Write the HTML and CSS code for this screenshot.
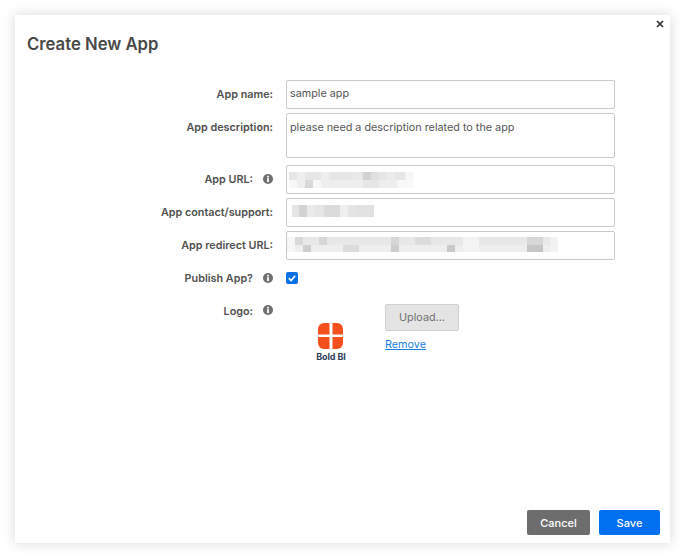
FILE: index.html
```html
<!DOCTYPE html>
<html lang="en">
<head>
<meta charset="utf-8">
<title>Create New App</title>
<link rel="stylesheet" href="styles.css">
</head>
<body>
<main class="dialog">
  <button class="close" aria-label="Close">
    <svg viewBox="0 0 8 8" width="8" height="8"><path d="M1 1l6 6M7 1L1 7" stroke="#333" stroke-width="1.7" fill="none"/></svg>
  </button>
  <h1 class="title">Create New App</h1>
  <form class="form">
    <div class="row">
      <label class="label">App name:</label>
      <div class="field"><div class="input">sample app</div></div>
    </div>
    <div class="row row-desc">
      <label class="label">App description:</label>
      <div class="field"><div class="input textarea">please need a description related to the app</div></div>
    </div>
    <div class="row row-first-url">
      <label class="label with-info">App URL:<svg class="info" viewBox="0 0 10 10"><circle cx="5" cy="5" r="5" fill="#6f6f6f"/><rect x="4.1" y="4.2" width="1.8" height="3.9" fill="#fff"/><rect x="4.1" y="1.8" width="1.8" height="1.7" fill="#fff"/></svg></label>
      <div class="field"><div class="input">
        <svg class="mosaic mosaic-url" width="124" height="16" viewBox="0 0 124 16">
          <rect width="116" height="8" fill="#e6e6e6"/><rect x="116" width="8" height="8" fill="#f6f6f6"/><rect y="8" width="124" height="8" fill="#eeeeee"/>
          <rect x="8" width="8" height="8" fill="#eeeeee"/><rect x="32" width="8" height="8" fill="#eeeeee"/><rect x="64" width="8" height="8" fill="#eaeaea"/><rect x="74" width="8" height="8" fill="#d2d2d2"/><rect x="82" width="8" height="8" fill="#e0e0e0"/><rect x="98" width="8" height="8" fill="#ececec"/>
          <rect x="0" y="8" width="8" height="8" fill="#f7f7f7"/><rect x="16" y="8" width="8" height="8" fill="#d9d9d9"/><rect x="24" y="8" width="8" height="8" fill="#f7f7f7"/><rect x="74" y="8" width="16" height="8" fill="#e6e6e6"/><rect x="108" y="8" width="16" height="8" fill="#f8f8f8"/>
        </svg>
      </div></div>
    </div>
    <div class="row">
      <label class="label">App contact/support:</label>
      <div class="field"><div class="input">
        <svg class="mosaic mosaic-contact" width="82" height="12" viewBox="0 0 82 12">
          <rect width="82" height="12" fill="#e5e5e5"/><rect x="7" width="8" height="12" fill="#d3d3d3"/><rect x="15" width="8" height="12" fill="#eaeaea"/><rect x="32" width="16" height="12" fill="#dbdbdb"/><rect x="48" width="8" height="12" fill="#efefef"/><rect x="64" width="18" height="12" fill="#e2e2e2"/>
        </svg>
      </div></div>
    </div>
    <div class="row">
      <label class="label">App redirect URL:</label>
      <div class="field"><div class="input">
        <svg class="mosaic mosaic-redirect" width="271" height="15" viewBox="0 0 271 15">
          <rect width="271" height="8" fill="#e8e8e8"/><rect y="8" width="271" height="7" fill="#eeeeee"/>
          <rect x="0" width="8" height="15" fill="#f6f6f6"/><rect x="8" width="8" height="8" fill="#d9d9d9"/><rect x="16" y="8" width="8" height="7" fill="#cfcfcf"/><rect x="32" width="8" height="8" fill="#d6d6d6"/><rect x="56" y="8" width="16" height="7" fill="#dcdcdc"/><rect x="104" width="8" height="8" fill="#d6d6d6"/><rect x="104" y="8" width="8" height="7" fill="#cecece"/><rect x="128" width="16" height="8" fill="#dcdcdc"/><rect x="160" y="8" width="8" height="7" fill="#c9c9c9"/><rect x="176" width="16" height="15" fill="#f3f3f3"/><rect x="240" width="16" height="8" fill="#d7d7d7"/><rect x="240" y="8" width="16" height="7" fill="#c6c6c6"/><rect x="263" width="8" height="15" fill="#f2f2f2"/>
        </svg>
      </div></div>
    </div>
    <div class="row row-publish">
      <label class="label with-info">Publish App?<svg class="info" viewBox="0 0 10 10"><circle cx="5" cy="5" r="5" fill="#6f6f6f"/><rect x="4.1" y="4.2" width="1.8" height="3.9" fill="#fff"/><rect x="4.1" y="1.8" width="1.8" height="1.7" fill="#fff"/></svg></label>
      <div class="field">
        <span class="check"><svg viewBox="0 0 12 12" width="12" height="12"><path d="M2.8 6.2l2.3 2.3 4.1-4.7" stroke="#fff" stroke-width="1.7" fill="none"/></svg></span>
      </div>
    </div>
    <div class="row row-logo">
      <label class="label with-info">Logo:<svg class="info" viewBox="0 0 10 10"><circle cx="5" cy="5" r="5" fill="#6f6f6f"/><rect x="4.1" y="4.2" width="1.8" height="3.9" fill="#fff"/><rect x="4.1" y="1.8" width="1.8" height="1.7" fill="#fff"/></svg></label>
      <div class="field logo-field">
        <div class="logo">
          <svg viewBox="0 0 26 26" width="26" height="26">
            <path d="M6 0H11.5V11.5H0V6a6 6 0 0 1 6-6Z" fill="#f4501e"/>
            <path d="M14.5 0H19a6 6 0 0 1 6 6v5.500H14.500Z" fill="#f4501e"/>
            <path d="M0 14H11.500V26H6a6 6 0 0 1-6-6Z" fill="#f4501e"/>
            <path d="M14.500 14H25v6a6 6 0 0 1-6 6h-4.500Z" fill="#f4501e"/>
          </svg>
          <span class="logo-text">Bold BI</span>
        </div>
        <div class="logo-actions">
          <button type="button" class="upload">Upload...</button>
          <a class="remove" href="#">Remove</a>
        </div>
      </div>
    </div>
  </form>
  <footer class="footer">
    <button type="button" class="btn cancel">Cancel</button>
    <button type="button" class="btn save">Save</button>
  </footer>
</main>
</body>
</html>
```
FILE: styles.css
```css
* { box-sizing: border-box; }
html, body { margin: 0; height: 100%; background: #fff; overflow: hidden; }
body { padding: 15px 15px 14px; font-family: Inter, "Noto Sans", sans-serif; color: #4a4a4a; }
.dialog {
  position: relative;
  width: 655px;
  height: 528px;
  background: #fff;
  box-shadow: 0 0 12px rgba(0, 0, 0, 0.16);
  display: flex;
  flex-direction: column;
}
.close {
  position: absolute;
  top: 4px;
  right: 5px;
  width: 10px;
  height: 10px;
  padding: 0;
  border: 0;
  background: none;
  display: flex;
  align-items: center;
  justify-content: center;
}
.title {
  margin: 19px 0 0 12px;
  font-size: 16.7px;
  line-height: 20px;
  font-weight: 600;
  color: #484848;
}
.form {
  margin-top: 26px;
  display: flex;
  flex-direction: column;
  gap: 6px;
}
.row {
  display: grid;
  grid-template-columns: 258px 329px;
  column-gap: 13px;
  height: 27px;
}
.row-desc { height: 45px; }
.row-first-url { margin-top: 1px; }
.row-publish { height: 20px; margin-top: 7px; }
.row-logo { height: 70px; margin-top: 5px; }
.label {
  text-align: right;
  font-size: 10.8px;
  line-height: 29px;
  font-weight: 600;
  color: #505050;
  position: relative;
}
.with-info { padding-right: 20px; }
.row-publish .label { line-height: 15px; }
.row-logo .label { line-height: 19px; }
.info {
  position: absolute;
  right: 0;
  top: 9px;
  width: 10px;
  height: 10px;
}
.row-publish .info { top: 2px; }
.row-logo .info { top: 3px; }
.input {
  height: 100%;
  border: 1px solid #c9c9c9;
  border-radius: 2px;
  padding: 0 3px;
  font-size: 10.8px;
  line-height: 25px;
  color: #555;
  display: flex;
  align-items: flex-start;
  background: #fff;
  overflow: hidden;
}
.textarea { line-height: 27px; }
.mosaic { display: block; }
.mosaic-url { margin: 6px 0 0 -1px; }
.mosaic-contact { margin: 6px 0 0 2px; }
.mosaic-redirect { margin: 5px 0 0 -3px; }
.check {
  margin: 1px 0 0 0;
  width: 12px;
  height: 12px;
  border-radius: 2px;
  background: #0a70e8;
  display: block;
}
.check svg { display: block; }
.logo-field { display: flex; }
.logo {
  width: 90px;
  height: 48px;
  margin: 21px 0 0 0;
  display: flex;
  flex-direction: column;
  align-items: center;
}
.logo svg { display: block; }
.logo-text {
  font-size: 9px;
  line-height: 12px;
  margin-top: 2px;
  font-weight: 700;
  letter-spacing: -0.1px;
  color: #2f3d5c;
}
.logo-actions {
  margin: 0 0 0 9px;
  display: flex;
  flex-direction: column;
  align-items: flex-start;
}
.upload {
  margin-top: 2px;
  width: 74px;
  height: 27px;
  border: 1px solid #d0d0d0;
  border-radius: 2px;
  background: #e4e4e4;
  color: #6f6f6f;
  font: 400 10.8px Inter, sans-serif;
}
.remove {
  margin-top: 7px;
  font-size: 10.8px;
  line-height: 14px;
  color: #1a7fe8;
  text-decoration: underline;
}
.footer {
  margin-top: auto;
  padding: 0 10px 8px 0;
  display: flex;
  justify-content: flex-end;
  gap: 9px;
}
.btn {
  height: 25px;
  border: 0;
  border-radius: 2px;
  color: #fff;
  font: 500 11px Inter, sans-serif;
}
.cancel { width: 63px; background: #6d6d6d; }
.save { width: 61px; background: #0070f0; }
```
